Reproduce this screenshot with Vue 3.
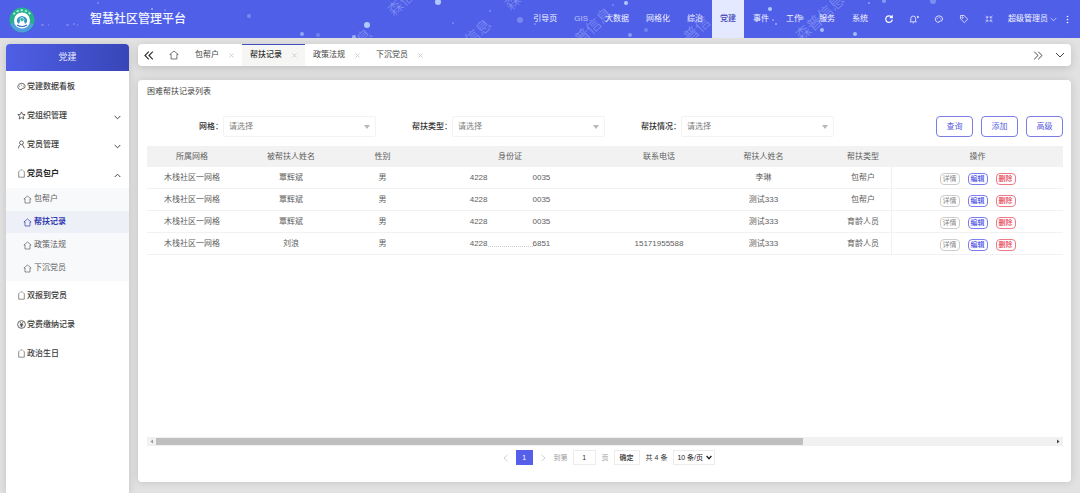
<script setup>
import { ref } from 'vue'

const topMenus = ['引导页', 'GIS', '大数据', '网格化', '综治', '党建', '事件', '工作', '服务', '系统']
const tools = ['refresh', 'bell', 'palette', 'tag', 'full']
const stars = [
  [249, 16, 2, 0.35], [302, 34, 2, 0.6], [318, 35, 2, 0.3], [367, 25, 3, 0.9], [354, 37, 2, 0.7],
  [438, 2, 3, 0.9], [453, 23, 1, 0.4], [490, 11, 1, 0.4], [520, 20, 3, 0.35], [535, 24, 1, 0.4],
  [626, 3, 2, 0.9], [613, 5, 1, 0.4], [630, 35, 2, 0.5], [646, 30, 2, 0.3], [770, 9, 2, 0.9],
  [776, 24, 1, 0.7], [773, 20, 1, 0.6], [802, 18, 2, 0.6], [822, 30, 2, 0.8], [855, 34, 2, 0.8],
  [869, 3, 1, 0.6], [884, 1, 2, 0.5], [933, 1, 3, 0.4], [98, 3, 1, 0.4], [152, 9, 1, 0.7], [165, 10, 1, 0.4]
]
const marks = [
  [365, 37, '息'], [396, 8, '森信'], [513, 2, '森'], [473, 37, '信息'],
  [583, 36, '普信息'], [692, 34, '普信'], [804, 33, '森普信息']
]
const menus = [
  { name: '党建数据看板', icon: 'palette' },
  { name: '党组织管理', icon: 'star', arrow: 'down' },
  { name: '党员管理', icon: 'user', arrow: 'down' },
  { name: '党员包户', icon: 'box', arrow: 'up', strong: true, children: ['包帮户', '帮扶记录', '政策法规', '下沉党员'] },
  { name: '双报到党员', icon: 'box' },
  { name: '党费缴纳记录', icon: 'yen' },
  { name: '政治生日', icon: 'box' }
]
const tabs = ['包帮户', '帮扶记录', '政策法规', '下沉党员']
const current = ref('帮扶记录')
const filters = ['网格', '帮扶类型', '帮扶情况']
const heads = ['所属网格', '被帮扶人姓名', '性别', '身份证', '联系电话', '帮扶人姓名', '帮扶类型']
const rows = [
  { name: '覃辉斌', tail: '0035', phone: '', helper: '李琳', type: '包帮户' },
  { name: '覃辉斌', tail: '0035', phone: '', helper: '测试333', type: '包帮户' },
  { name: '覃辉斌', tail: '0035', phone: '', helper: '测试333', type: '育龄人员' },
  { name: '刘浪', tail: '6851', phone: '15171955588', helper: '测试333', type: '育龄人员', trace: true }
]
const page = ref(1)
</script>

<template>
  <div class="app">
    <header class="top">
      <svg class="sky" width="1080" height="38" viewBox="0 0 1080 38" aria-hidden="true">
        <circle v-for="(s, i) in stars" :key="i" :cx="s[0]" :cy="s[1]" :r="s[2]" fill="#b9d4ff" :opacity="s[3]" />
        <text v-for="(m, i) in marks" :key="'m' + i" x="-8" y="5" :transform="`translate(${m[0]} ${m[1]}) rotate(-43)`" class="mark">{{ m[2] }}</text>
        <path d="M41 25h3M48 25h1M66 25h3M73 24h2M77 25h1" stroke="#a9b4ff" stroke-opacity=".7" />
      </svg>
      <svg class="logo" width="26" height="26" viewBox="0 0 26 26" aria-hidden="true">
        <circle cx="13" cy="13" r="12.5" fill="#26ae8d" />
        <path d="M1.5 17A12.2 12.2 0 0 0 24.5 17L20 15H6Z" fill="#4f9fdc" />
        <path d="M4.5 7.5A10.5 10.5 0 0 1 21.500 7.5" fill="none" stroke="#a5f0dc" stroke-width="1.8" stroke-dasharray="2.4 1.8" />
        <circle cx="13" cy="13.500" r="8" fill="#fff" />
        <path d="M8 15q-1-5 5-6 6 1 5 6l-2 2-1-3h-4l-1 3z" fill="#3b90c9" />
        <circle cx="13" cy="12.500" r="2" fill="#2cb89a" stroke="#d9fff6" stroke-width=".7" />
        <path d="M8 18q5 3 10 0" fill="none" stroke="#3b6fc4" stroke-width="1.2" />
      </svg>
      <h1>智慧社区管理平台</h1>
      <nav class="nav">
        <a v-for="m in topMenus" :key="m" href="#" :class="{ on: m === '党建', dim: m === 'GIS' }">{{ m }}</a>
        <button v-for="t in tools" :key="t" type="button" class="tool" :aria-label="t">
          <svg width="10" height="10" viewBox="0 0 10 10" fill="none" stroke="#fff" stroke-width=".9">
            <path v-if="t === 'refresh'" d="M7.8 3.3A3.3 3.3 0 1 0 8.3 5.6M8.2 1.2V3.6H5.8" stroke-width="1.2" />
            <g v-else-if="t === 'bell'" opacity=".85"><path d="M.8 7.800H7.600M1.800 7.500V4.500Q2 2 4.200 2 6.500 2 6.600 4.500V7.500M3.600 8.800H4.900" /><circle cx="8.800" cy="3" r=".7" fill="#fff" /></g>
            <path v-else-if="t === 'palette'" d="M3.4 8.2Q1 7.3 1.3 4.6 2 1.8 5 1.8 8.4 2 8.7 4.8 8.600 7.300 6 7.200 5 7.200 5 8.300ZM3.200 5.200V4.300M5 4V3.200M6.800 5.200V4.300" opacity=".85" />
            <g v-else-if="t === 'tag'" opacity=".8"><path d="M1.4 1.5 5 1.5 8.8 5.2 5.4 8.6 1.5 4.9Z" /><circle cx="3.5" cy="3.6" r=".7" /></g>
            <path v-else d="M1.5 1.8 3.8 3.9V2M3.8 3.9H1.7M8.5 1.8 6.2 3.9V2M6.2 3.9H8.3M1.5 8.2 3.8 6.1V8M3.8 6.1H1.7M8.5 8.2 6.2 6.1V8M6.2 6.1H8.3" stroke-width=".7" opacity=".8" />
          </svg>
        </button>
        <button type="button" class="account">超级管理员
          <svg width="7" height="5" viewBox="0 0 7 5" fill="none" stroke="#c0c6ff"><path d="M.7 1 3.5 3.8 6.3 1" /></svg>
        </button>
        <button type="button" class="more" aria-label="更多">
          <svg width="3" height="9" viewBox="0 0 3 9" fill="#fff"><circle cx="1.5" cy="1.5" r=".8" /><circle cx="1.5" cy="4.5" r=".8" /><circle cx="1.5" cy="7.5" r=".8" /></svg>
        </button>
      </nav>
    </header>

    <div class="body">
      <aside class="side">
        <h2>党建</h2>
        <ul class="menu">
          <li v-for="m in menus" :key="m.name">
            <a href="#" class="item" :class="{ strong: m.strong }">
              <svg width="9" height="9" viewBox="0 0 9 9" fill="none" stroke="#444" stroke-width=".8">
                <path v-if="m.icon === 'palette'" d="M2.6 7.4Q.6 6.5.8 4.3 1.5 1.4 4.5 1.3 7.8 1.4 8.2 4.2 8.2 6.6 5.7 6.4 4.6 6.4 4.5 7.6ZM2.6 4.6V3.8M4.4 3.6V2.8M6.3 4.6V3.8" />
                <path v-else-if="m.icon === 'star'" d="M4.5.9 5.6 3.4 8.2 3.6 6.2 5.3 6.8 8 4.5 6.6 2.2 8 2.8 5.3.8 3.6 3.4 3.4Z" />
                <g v-else-if="m.icon === 'user'"><circle cx="4.5" cy="2.8" r="1.9" /><path d="M3.5 4.6Q1.6 5.5 1.5 8.3M5.4 4.6 7.4 8.3" /></g>
                <g v-else-if="m.icon === 'yen'"><circle cx="4.5" cy="4.5" r="3.9" /><path d="M2.8 2 4.5 4.2 6.2 2M4.5 4.2V7.4M2.8 4.5H6.2M2.8 5.8H6.2" /></g>
                <path v-else d="M3 1.4 1.7 2.8V8.2H7.3V2.8L6 1.4M3.6.9H5.4" opacity=".75" />
              </svg>
              <span>{{ m.name }}</span>
              <svg v-if="m.arrow" class="arrow" width="7" height="5" viewBox="0 0 7 5" fill="none" stroke="#444">
                <path :d="m.arrow === 'up' ? 'M.7 4 3.5 1.2 6.3 4' : 'M.7 1 3.5 3.8 6.3 1'" />
              </svg>
            </a>
            <ul v-if="m.children" class="sub">
              <li v-for="c in m.children" :key="c">
                <a href="#" :class="{ on: c === current }">
                  <svg width="9" height="9" viewBox="0 0 9 9" fill="none" stroke="currentColor" stroke-width=".7"><path d="M4.5 1 .9 4H2V8H7V4H8.1Z" /></svg>
                  <span>{{ c }}</span>
                </a>
              </li>
            </ul>
          </li>
        </ul>
      </aside>

      <main class="main">
        <div class="tabs">
          <button type="button" class="edge" aria-label="向左">
            <svg width="10" height="9" viewBox="0 0 10 9" fill="none" stroke="#333" stroke-width="1.2"><path d="M4.8.7 1 4.5 4.8 8.3M8.8.7 5 4.5 8.8 8.3" /></svg>
          </button>
          <button type="button" class="home" aria-label="首页">
            <svg width="10" height="10" viewBox="0 0 10 10" fill="none" stroke="#555" stroke-width=".8"><path d="M5 1 .8 4.5H2.1V9H7.9V4.5H9.2Z" /></svg>
          </button>
          <div v-for="t in tabs" :key="t" class="tab" :class="{ on: t === current }">
            <a href="#" @click.prevent="current = t">{{ t }}</a>
            <button type="button" :aria-label="'关闭' + t">
              <svg width="5" height="5" viewBox="0 0 5 5" stroke="#c4c4c4" stroke-width=".8"><path d="M.5.5 4.5 4.5M4.5.5.5 4.5" /></svg>
            </button>
          </div>
          <button type="button" class="edge last" aria-label="向右">
            <svg width="10" height="9" viewBox="0 0 10 9" fill="none" stroke="#444"><path d="M1.2.7 5 4.5 1.2 8.3M5.2.7 9 4.5 5.2 8.3" /></svg>
          </button>
          <button type="button" class="edge" aria-label="展开">
            <svg width="10" height="6" viewBox="0 0 10 6" fill="none" stroke="#444"><path d="M1 1 5 5 9 1" /></svg>
          </button>
        </div>

        <section class="card">
          <h3>困难帮扶记录列表</h3>
          <form class="filters" @submit.prevent>
            <div v-for="(f, i) in filters" :key="f" class="field">
              <label :for="'f' + i">{{ f }}：</label>
              <div class="pick">
                <select :id="'f' + i"><option>请选择</option></select>
                <svg width="6" height="4" viewBox="0 0 6 4" fill="#b8b8b8"><path d="M0 0H6L3 4Z" /></svg>
              </div>
            </div>
            <div class="actions">
              <button type="submit">查询</button>
              <button type="button">添加</button>
              <button type="button">高级</button>
            </div>
          </form>

          <div class="grid">
            <table>
              <colgroup>
                <col class="c1" /><col class="c2" /><col class="c3" /><col class="c4" /><col class="c5" /><col class="c6" /><col class="c7" /><col class="c8" />
              </colgroup>
              <thead>
                <tr>
                  <th v-for="(h, i) in heads" :key="h" :class="{ cut: i === 6 }">{{ h }}</th>
                  <th class="fix">操作</th>
                </tr>
              </thead>
              <tbody>
                <tr v-for="(r, i) in rows" :key="i">
                  <td>木栈社区一网格</td>
                  <td>{{ r.name }}</td>
                  <td>男</td>
                  <td><span class="idno">4228<i :class="{ trace: r.trace }"></i>{{ r.tail }}</span></td>
                  <td>{{ r.phone }}</td>
                  <td>{{ r.helper }}</td>
                  <td class="cut">{{ r.type }}</td>
                  <td class="fix">
                    <div class="ops">
                      <button type="button">详情</button>
                      <button type="button" class="edit">编辑</button>
                      <button type="button" class="del">删除</button>
                    </div>
                  </td>
                </tr>
              </tbody>
            </table>
          </div>

          <div class="scroll">
            <svg width="3" height="5" viewBox="0 0 3 5" fill="#999"><path d="M3 .5V4.5L.5 2.5Z" /></svg>
            <div class="track"><div class="thumb"></div></div>
            <svg width="3" height="5" viewBox="0 0 3 5" fill="#444"><path d="M0 .5V4.5L2.5 2.5Z" /></svg>
          </div>

          <div class="pager">
            <button type="button" class="step" aria-label="上一页"><svg width="5" height="8" viewBox="0 0 5 8" fill="none" stroke="#d0d0d0"><path d="M4.5.8 1 4 4.5 7.2" /></svg></button>
            <button type="button" class="num">1</button>
            <button type="button" class="step" aria-label="下一页"><svg width="5" height="8" viewBox="0 0 5 8" fill="none" stroke="#d0d0d0"><path d="M.5.8 4 4 .5 7.2" /></svg></button>
            <label for="page">到第</label>
            <input id="page" v-model="page" type="text" />
            <span class="unit">页</span>
            <button type="button" class="ok">确定</button>
            <span class="total">共 4 条</span>
            <div class="size">
              <select aria-label="每页条数"><option>10 条/页</option></select>
              <svg width="6" height="5" viewBox="0 0 6 5" fill="none" stroke="#222" stroke-width="1.4"><path d="M.6 1 3 3.6 5.4 1" /></svg>
            </div>
          </div>
        </section>
      </main>
    </div>
  </div>
</template>

<style>
html, body { background: #e2e2e3; }
body { overflow: hidden; }
</style>

<style scoped>
.app {
  height: 100vh;
  display: flex;
  flex-direction: column;
  font: 8px/12px "Liberation Sans", "Noto Sans CJK SC", sans-serif;
  color: #606060;
}
.app * { box-sizing: border-box; }
a { color: inherit; text-decoration: none; }
h1, h2, h3, ul { margin: 0; padding: 0; list-style: none; }
button, input, select { font: inherit; color: inherit; margin: 0; padding: 0; border: 0; background: none; outline: 0; }
button { cursor: pointer; }
svg { flex: none; }
select { appearance: none; width: 100%; height: 100%; }

.top {
  position: relative;
  height: 38px;
  flex: none;
  display: flex;
  align-items: center;
  padding: 0 11px 0 9px;
  background: #505fe8;
  color: #f2f4ff;
  overflow: hidden;
}
.sky { position: absolute; left: 0; top: 0; }
.mark { font-size: 15px; font-weight: 300; fill: #b6c4ff; opacity: .5; }
.logo { position: relative; margin-top: 2px; }
h1 { position: relative; margin-left: 55px; font-size: 12px; line-height: 18px; font-weight: 500; }
.nav { position: relative; margin-left: auto; display: flex; gap: 1px; align-items: stretch; height: 38px; line-height: 38px; }
.nav a { padding: 0 8px; }
.nav .dim { opacity: .65; }
.nav .on { background: #e5e9ff; color: #3f45b8; font-weight: 500; }
.tool { width: 24px; display: flex; align-items: center; justify-content: center; }
.account { display: flex; align-items: center; gap: 2px; margin-left: 6px; }
.more { display: flex; align-items: center; margin-left: 8px; }

.body { flex: 1; min-height: 0; display: flex; gap: 9px; padding: 6px 9px 0 6px; }
.side {
  width: 123px;
  flex: none;
  background: #fff;
  border-radius: 4px 4px 0 0;
  box-shadow: 0 1px 8px rgba(0, 0, 0, .14);
}
h2 {
  height: 27px;
  line-height: 27px;
  text-align: center;
  font-size: 9px;
  font-weight: 400;
  color: #eef0ff;
  background: linear-gradient(90deg, #4f5fe6, #3846b8);
  border-radius: 4px 4px 0 0;
}
.menu { padding-top: 1px; }
.item { display: flex; align-items: center; height: 29px; padding: 0 8px 0 11px; gap: 1px; color: #3a3a3a; font-weight: 500; }
.item.strong { font-weight: 700; color: #222; }
.arrow { margin: 4px 0 0 auto; }
.sub { display: grid; gap: 1px; padding: 0 0 2px; background: #f8f9fb; }
.sub a { display: flex; align-items: center; gap: 2px; height: 22px; padding-left: 17px; color: #606060; }
.sub .on { background: #eef0f8; color: #343cb0; font-weight: 700; }

.main { flex: 1; min-width: 0; display: flex; flex-direction: column; gap: 14px; padding-bottom: 11px; }
.tabs {
  height: 22px;
  flex: none;
  display: flex;
  background: #fff;
  border-radius: 4px;
  box-shadow: 0 2px 8px rgba(0, 0, 0, .16);
}
.edge, .home { width: 22px; display: flex; align-items: center; justify-content: center; }
.home { width: 27px; }
.last { margin-left: auto; }
.tab { display: flex; align-items: center; padding: 0 8px; gap: 10px; color: #444; }
.tab button { width: 5px; height: 22px; display: flex; align-items: center; }
.tab.on { background: #f6f6f5; color: #333; font-weight: 500; box-shadow: inset 0 1px #4450bd; }

.card {
  flex: 1;
  min-height: 0;
  display: flex;
  flex-direction: column;
  padding: 6px 8px 17px 9px;
  background: #fff;
  border-radius: 4px;
  box-shadow: 0 0 8px rgba(0, 0, 0, .14);
}
h3 { font-size: 8px; line-height: 12px; font-weight: 400; color: #444; }
.filters { display: flex; align-items: center; margin-top: 18px; }
.field { display: flex; align-items: center; flex: 0 1 229px; }
.field label { width: 76px; text-align: right; color: #333; font-weight: 500; }
.pick { position: relative; flex: 1; height: 21px; }
.pick select { padding-left: 5px; border: 1px solid #f3f3f3; border-radius: 2px; color: #808080; }
.pick svg { position: absolute; right: 6px; top: 9px; }
.actions { display: flex; gap: 8px; margin-left: auto; }
.actions button { width: 37px; height: 21px; border: 1px solid #7c7ee4; border-radius: 4px; color: #5a5ce0; }

.grid { margin-top: 9px; overflow: hidden; }
table { width: 100%; table-layout: fixed; border-collapse: separate; border-spacing: 0; text-align: center; }
.c1 { width: 90px; } .c2 { width: 108px; } .c3 { width: 75px; } .c4 { width: 180px; }
.c5 { width: 118px; } .c6 { width: 91px; } .c7 { width: 82px; } .c8 { width: 172px; }
th, td { height: 22px; padding: 0; border-bottom: 1px solid #f2f2f2; }
th { height: 21px; border: 0; background: #f2f2f2; font-weight: 400; }
.cut { padding-left: 26px; }
.fix { border-left: 1px solid #f1f1f1; }
.idno { display: inline-flex; align-items: center; }
.idno i { width: 45px; height: 7px; }
.idno .trace { border-bottom: 1px dotted #ccc; }
.ops { display: flex; justify-content: center; gap: 8px; padding-top: 2px; }
.ops button { width: 20px; height: 12px; border: 1px solid #ccc; border-radius: 4px; font-size: 7px; line-height: 10px; color: #888; }
.ops .edit { border-color: #7c7ef0; color: #4a4ee8; font-weight: 500; }
.ops .del { border-color: #ee7a86; color: #e8404f; font-weight: 500; }

.scroll { margin-top: auto; height: 9px; display: flex; align-items: center; gap: 3px; padding: 0 3px; background: #f1f1f1; }
.track { flex: 1; height: 7px; }
.thumb { width: 72%; height: 7px; background: #bfbfbf; }

.pager { display: flex; align-items: center; justify-content: center; margin-top: 4px; height: 15px; font-size: 7px; color: #333; }
.step { width: 21px; height: 15px; display: flex; align-items: center; justify-content: center; }
.num { width: 17px; height: 15px; background: #555fea; color: #fff; }
.pager label { color: #999; }
.pager input { width: 23px; height: 15px; margin: 0 6px 0 5px; border: 1px solid #ececec; text-align: center; }
.unit { color: #999; }
.ok { width: 26px; height: 15px; margin: 0 6px 0 5px; border: 1px solid #ececec; font-weight: 500; }
.size { position: relative; width: 42px; height: 15px; margin-left: 6px; }
.size select { padding-left: 3px; border: 1px solid #ececec; color: #222; }
.size svg { position: absolute; right: 3px; top: 5px; }
</style>
